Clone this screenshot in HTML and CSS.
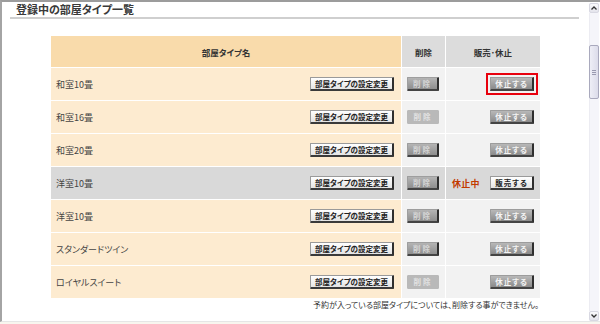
FILE: index.html
```html
<!DOCTYPE html>
<html lang="ja">
<head>
<meta charset="utf-8">
<title>登録中の部屋タイプ一覧</title>
<link rel="stylesheet" href="styles.css">
</head>
<body>
<div class="frame">
  <div class="main">
    <h2 class="title">登録中の部屋タイプ一覧</h2>
    <div class="grid">
      <div class="hd hd-name">部屋タイプ名</div>
      <div class="hd hd-gray">削除</div>
      <div class="hd hd-gray">販売･休止</div>

      <div class="c name"><span>和室10畳</span><span class="btn btn-light btn-edit">部屋タイプの設定変更</span></div>
      <div class="c del"><span class="btn btn-del">削除</span></div>
      <div class="c sale"><span class="btn btn-dark btn-sale marked">休止する</span></div>

      <div class="c name"><span>和室16畳</span><span class="btn btn-light btn-edit">部屋タイプの設定変更</span></div>
      <div class="c del"><span class="btn btn-del flat">削除</span></div>
      <div class="c sale"><span class="btn btn-dark btn-sale">休止する</span></div>

      <div class="c name"><span>和室20畳</span><span class="btn btn-light btn-edit">部屋タイプの設定変更</span></div>
      <div class="c del"><span class="btn btn-del">削除</span></div>
      <div class="c sale"><span class="btn btn-dark btn-sale">休止する</span></div>

      <div class="c name off"><span>洋室10畳</span><span class="btn btn-light btn-edit">部屋タイプの設定変更</span></div>
      <div class="c del off"><span class="btn btn-del">削除</span></div>
      <div class="c sale off"><span class="status">休止中</span><span class="btn btn-light btn-sale">販売する</span></div>

      <div class="c name"><span>洋室10畳</span><span class="btn btn-light btn-edit">部屋タイプの設定変更</span></div>
      <div class="c del"><span class="btn btn-del">削除</span></div>
      <div class="c sale"><span class="btn btn-dark btn-sale">休止する</span></div>

      <div class="c name"><span>スタンダードツイン</span><span class="btn btn-light btn-edit">部屋タイプの設定変更</span></div>
      <div class="c del"><span class="btn btn-del">削除</span></div>
      <div class="c sale"><span class="btn btn-dark btn-sale">休止する</span></div>

      <div class="c name"><span>ロイヤルスイート</span><span class="btn btn-light btn-edit">部屋タイプの設定変更</span></div>
      <div class="c del"><span class="btn btn-del flat">削除</span></div>
      <div class="c sale"><span class="btn btn-dark btn-sale">休止する</span></div>
    </div>
    <p class="note">予約が入っている部屋タイプについては、削除する事ができません。</p>
  </div>
  <div class="scroll">
    <div class="sb-btn"><svg width="6" height="4" viewBox="0 0 6 4"><path d="M0.5 3.5 L3 1 L5.5 3.5" fill="none" stroke="#333" stroke-width="1.3"/></svg></div>
    <div class="sb-track"><div class="sb-thumb"><span class="grip"></span></div></div>
    <div class="sb-btn"><svg width="6" height="4" viewBox="0 0 6 4"><path d="M0.5 0.5 L3 3 L5.5 0.5" fill="none" stroke="#333" stroke-width="1.3"/></svg></div>
  </div>
</div>
</body>
</html>
```
FILE: styles.css
```css
html, body {
  margin: 0;
  padding: 0;
}
body {
  width: 600px;
  height: 324px;
  overflow: hidden;
  background: #f8f6ef;
  font-family: "Noto Sans CJK JP", "DejaVu Sans", sans-serif;
  font-feature-settings: "palt";
  color: #333;
}
.frame {
  box-sizing: border-box;
  height: 322px;
  border-top: 2px solid #9c9c9c;
  border-left: 2px solid #a4a4a4;
  border-bottom: 1px solid #e6e6e6;
  background: #fff;
  display: flex;
}
.main {
  flex: 1;
  margin: 0 10px 0 8px;
}
.title {
  margin: 0;
  height: 15px;
  padding-left: 6px;
  font-size: 11px;
  line-height: 15px;
  font-weight: bold;
  color: #3a3a3a;
  border-bottom: 2px solid #cfcfcf;
}
.grid {
  margin: 17px 0 0 41px;
  width: 489px;
  display: grid;
  grid-template-columns: 350px 43px 94px;
  grid-template-rows: 31px repeat(7, 32px);
  gap: 1px;
}
.hd {
  display: flex;
  align-items: center;
  justify-content: center;
  font-size: 8.5px;
  font-weight: bold;
  color: #333;
}
.hd-name { background: #f9dbab; }
.hd-gray { background: #dcdcdc; }
.c {
  display: flex;
  align-items: center;
  font-size: 9px;
  color: #444;
}
.name {
  background: #fdebd0;
  padding: 0 7px 0 5px;
  justify-content: space-between;
}
.del {
  background: #f2f2f2;
  justify-content: center;
  padding-right: 1px;
}
.sale {
  background: #f2f2f2;
  padding: 0 6px;
  justify-content: flex-end;
}
.off { background: #d9d9d9; }
.sale.off { justify-content: space-between; }
.status {
  color: #c23a00;
  font-weight: bold;
  font-size: 9px;
  letter-spacing: 0.3px;
}
.btn {
  box-sizing: border-box;
  height: 14px;
  display: inline-flex;
  align-items: center;
  justify-content: center;
  font-size: 7.5px;
  font-weight: bold;
  line-height: 1;
  border-radius: 1px;
}
.btn-light {
  background: linear-gradient(#ffffff, #e4e4e4);
  border: 1px solid #9a9a9a;
  border-right: 2px solid #2e2e2e;
  border-bottom: 2px solid #3a3a3a;
  color: #222;
}
.btn-edit { width: 84px; }
.btn-del {
  width: 32px;
  background: linear-gradient(#b4b4b4, #8e8e8e);
  border: 1px solid #9e9e9e;
  border-right: 2px solid #2e2e2e;
  border-bottom: 2px solid #444;
  color: #d6d6d6;
  letter-spacing: 2px;
}
.btn-del.flat {
  background: #b9b9b9;
  border: 1px solid #b9b9b9;
  color: #e2e2e2;
}
.btn-dark {
  background: linear-gradient(#b8b8b8, #8a8a8a);
  border: 1px solid #9c9c9c;
  border-right: 2px solid #2e2e2e;
  border-bottom: 2px solid #444;
  color: #f4f4f4;
  letter-spacing: 1px;
}
.btn-sale { width: 44px; }
.btn-light.btn-sale { letter-spacing: 1px; }
.marked {
  border-radius: 0;
  outline: 2px solid #e8000d;
  outline-offset: 2px;
}
.note {
  margin: 1px 0 0 41px;
  width: 488px;
  text-align: right;
  font-size: 8px;
  line-height: 12px;
  color: #333;
}
.scroll {
  width: 10px;
  margin: 1px 1px 0 0;
  display: flex;
  flex-direction: column;
  background: #f5f5fa;
}
.sb-btn {
  height: 10px;
  box-sizing: border-box;
  border: 1px solid #d8d8e2;
  border-radius: 2px;
  background: linear-gradient(#fafafc, #e4e4ec);
  display: flex;
  align-items: center;
  justify-content: center;
}
.sb-track {
  flex: 1;
  padding-top: 32px;
  border-left: 1px solid #ececf2;
}
.sb-thumb {
  box-sizing: border-box;
  height: 54px;
  margin-left: -1px;
  border: 1px solid #a9a9bd;
  border-radius: 2px;
  background: linear-gradient(90deg, #eeeef6, #dcdcea);
  display: flex;
  align-items: center;
  justify-content: center;
}
.grip {
  width: 4px;
  height: 5px;
  background: repeating-linear-gradient(#9a9ab0 0 1px, transparent 1px 2px);
}
```
